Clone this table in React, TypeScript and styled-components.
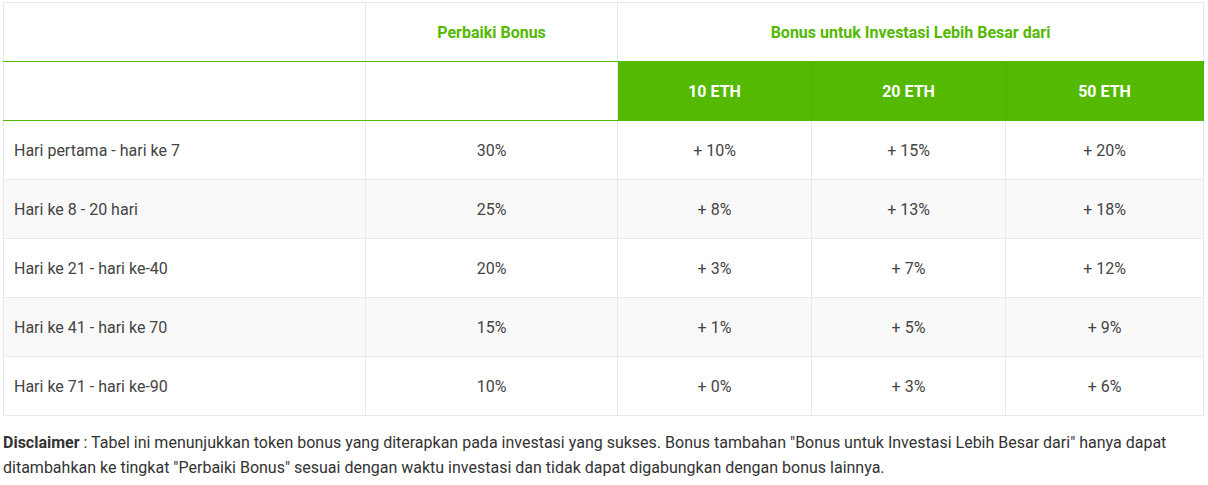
import React from "react";
import styled, { createGlobalStyle } from "styled-components";

const Global = createGlobalStyle`
  html, body { margin: 0; padding: 0; background: #fff; }
  body { font-family: Roboto, "Liberation Sans", Arial, sans-serif; }
`;

const GREEN = "#54b900";
const LINE = "#e9e9e9";

const Page = styled.div`
  padding: 2px 5px 0 3px;
  width: 1200px;
`;

const Table = styled.table`
  width: 1200px;
  border-collapse: collapse;
  table-layout: fixed;
  border: 1px solid ${LINE};
  font-size: 16px;
  color: #444;
`;

const Th = styled.th<{ $filled?: boolean }>`
  height: 58px;
  padding: 0;
  font-size: 16px;
  font-weight: 700;
  text-align: center;
  vertical-align: middle;
  color: ${(p) => (p.$filled ? "#fff" : GREEN)};
  background: ${(p) => (p.$filled ? GREEN : "#fff")};
  border-left: 1px solid ${(p) => (p.$filled ? "#4fae00" : LINE)};
  border-right: 1px solid ${(p) => (p.$filled ? "#4fae00" : LINE)};
  border-bottom: 1px solid ${GREEN};
`;

const Tr = styled.tr`
  &:nth-child(even) td { background: #f9f9f9; }
`;

const Td = styled.td<{ $left?: boolean }>`
  height: 58px;
  padding: 0 ${(p) => (p.$left ? "10px" : "0")};
  text-align: ${(p) => (p.$left ? "left" : "center")};
  vertical-align: middle;
  border: 1px solid ${LINE};
  background: #fff;
`;

const Disclaimer = styled.p`
  margin: 14px 0 0;
  font-size: 16px;
  line-height: 25px;
  color: #333;
  width: 1200px;
`;

const rows = [
  ["Hari pertama - hari ke 7", "30%", "+ 10%", "+ 15%", "+ 20%"],
  ["Hari ke 8 - 20 hari", "25%", "+ 8%", "+ 13%", "+ 18%"],
  ["Hari ke 21 - hari ke-40", "20%", "+ 3%", "+ 7%", "+ 12%"],
  ["Hari ke 41 - hari ke 70", "15%", "+ 1%", "+ 5%", "+ 9%"],
  ["Hari ke 71 - hari ke-90", "10%", "+ 0%", "+ 3%", "+ 6%"],
];

export default function App() {
  return (
    <Page>
      <Global />
      <Table>
        <colgroup>
          <col style={{ width: 362 }} />
          <col style={{ width: 252 }} />
          <col style={{ width: 194 }} />
          <col style={{ width: 194 }} />
          <col style={{ width: 198 }} />
        </colgroup>
        <thead>
          <tr>
            <Th />
            <Th>Perbaiki Bonus</Th>
            <Th colSpan={3}>Bonus untuk Investasi Lebih Besar dari</Th>
          </tr>
          <tr>
            <Th />
            <Th />
            <Th $filled>10 ETH</Th>
            <Th $filled>20 ETH</Th>
            <Th $filled>50 ETH</Th>
          </tr>
        </thead>
        <tbody>
          {rows.map((r) => (
            <Tr key={r[0]}>
              {r.map((c, i) => (
                <Td key={i} $left={i === 0}>
                  {c}
                </Td>
              ))}
            </Tr>
          ))}
        </tbody>
      </Table>
      <Disclaimer>
        <b>Disclaimer</b> : Tabel ini menunjukkan token bonus yang diterapkan pada investasi yang sukses. Bonus tambahan "Bonus untuk Investasi Lebih Besar dari" hanya dapat ditambahkan ke tingkat "Perbaiki Bonus" sesuai dengan waktu investasi dan tidak dapat digabungkan dengan bonus lainnya.
      </Disclaimer>
    </Page>
  );
}
